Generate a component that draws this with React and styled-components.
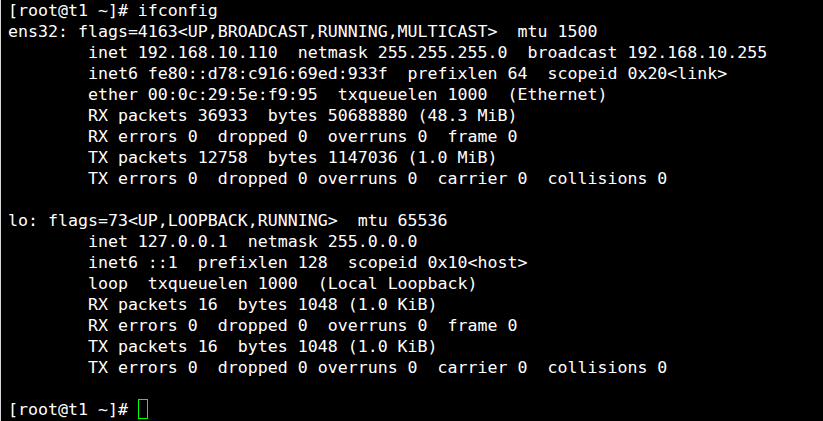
import React from "react";
import styled, { createGlobalStyle } from "styled-components";

const Global = createGlobalStyle`
  html, body { margin: 0; padding: 0; background: #000; }
  body { width: 823px; height: 421px; overflow: hidden; }
`;

const Terminal = styled.div`
  width: 823px;
  height: 421px;
  box-sizing: border-box;
  background: #000;
  color: #ffffff;
  font-family: "DejaVu Sans Mono", "Liberation Mono", monospace;
  font-size: 16.6px;
  line-height: 21px;
  padding: 0 0 0 7px;
  border-left: 1px solid #d8d8d8;
  display: flex;
  flex-direction: column;
`;

const Line = styled.div`
  white-space: pre;
  height: 21px;
`;

const Cursor = styled.span`
  display: inline-block;
  box-sizing: border-box;
  width: 10px;
  height: 20px;
  border: 1.5px solid #00ff00;
  vertical-align: top;
`;

const lines = [
  "[root@t1 ~]# ifconfig",
  "ens32: flags=4163<UP,BROADCAST,RUNNING,MULTICAST>  mtu 1500",
  "        inet 192.168.10.110  netmask 255.255.255.0  broadcast 192.168.10.255",
  "        inet6 fe80::d78:c916:69ed:933f  prefixlen 64  scopeid 0x20<link>",
  "        ether 00:0c:29:5e:f9:95  txqueuelen 1000  (Ethernet)",
  "        RX packets 36933  bytes 50688880 (48.3 MiB)",
  "        RX errors 0  dropped 0  overruns 0  frame 0",
  "        TX packets 12758  bytes 1147036 (1.0 MiB)",
  "        TX errors 0  dropped 0 overruns 0  carrier 0  collisions 0",
  "",
  "lo: flags=73<UP,LOOPBACK,RUNNING>  mtu 65536",
  "        inet 127.0.0.1  netmask 255.0.0.0",
  "        inet6 ::1  prefixlen 128  scopeid 0x10<host>",
  "        loop  txqueuelen 1000  (Local Loopback)",
  "        RX packets 16  bytes 1048 (1.0 KiB)",
  "        RX errors 0  dropped 0  overruns 0  frame 0",
  "        TX packets 16  bytes 1048 (1.0 KiB)",
  "        TX errors 0  dropped 0 overruns 0  carrier 0  collisions 0",
  "",
];

export default function App() {
  return (
    <>
      <Global />
      <Terminal>
        {lines.map((l, i) => (
          <Line key={i}>{l}</Line>
        ))}
        <Line>
          {"[root@t1 ~]# "}
          <Cursor />
        </Line>
      </Terminal>
    </>
  );
}
